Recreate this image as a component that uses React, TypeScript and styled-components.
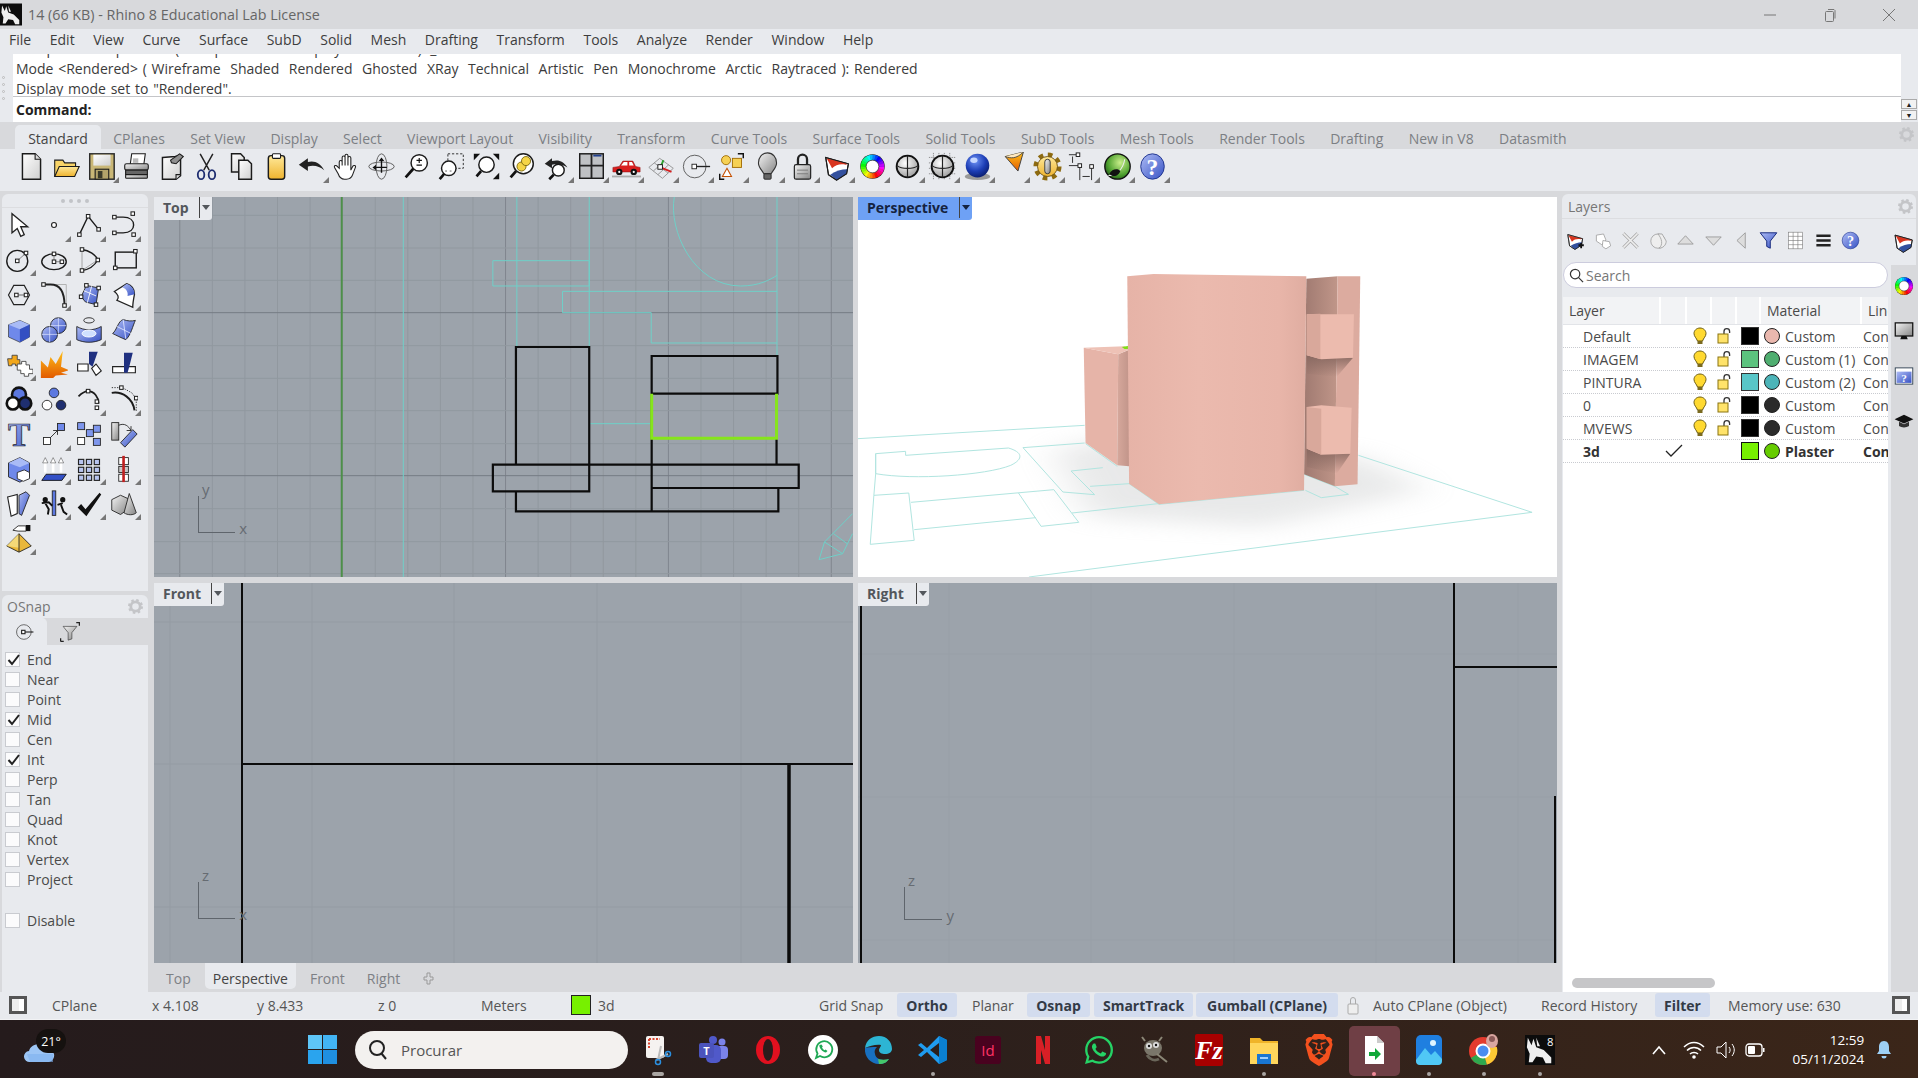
import React from "react";
import styled, { createGlobalStyle } from "styled-components";
import { FaWhatsapp } from "react-icons/fa";
import { SiBrave } from "react-icons/si";

const FONT = `"Open Sans", "Noto Sans", "Liberation Sans", sans-serif`;

const Global = createGlobalStyle`
  html, body { margin: 0; padding: 0; background: #d8d9dc; overflow: hidden; }
  #root { width: 1918px; height: 1078px; }
  * { box-sizing: border-box; }
`;

const Page = styled.div`
  width: 1918px; height: 1078px; display: flex; flex-direction: column; overflow: hidden;
  font-family: ${FONT}; font-size: 14px; color: #444; background: #d8d9dc;
`;
const HiddenDefs = styled.svg`position: absolute; width: 0; height: 0;`;
const Ico = styled.svg`display: block; flex: none;`;

/* ---------- title + menu ---------- */
const TitleBar = styled.div`height: 29px; background: #d8d9dc; display: flex; align-items: center; color: #666;`;
const TitleLogo = styled.div`width: 22px; height: 27px; margin-right: 6px; flex: none;`;
const TitleText = styled.div`flex: 1; font-size: 14.3px;`;
const WinControls = styled.div`display: flex; align-items: center;`;
const WinBtn = styled.div<{ $w: number }>`width: ${(p) => p.$w}px; display: flex; justify-content: center; color: #777;`;
const MenuBar = styled.div`height: 25px; background: #e8eaee; display: flex; align-items: center; gap: 18.6px; padding: 0 0 4px 9px; color: #3d3d3d;`;

/* ---------- command ---------- */
const Command = styled.div`height: 68px; display: flex; background: #e8eaee;`;
const Grip = styled.div`width: 13px; display: flex; flex-direction: column; align-items: center; justify-content: center; gap: 4px; background: #e8eaee;`;
const GripDot = styled.span`width: 3px; height: 3px; border-radius: 50%; border: 1px solid #bbb; margin-left: -6px;`;
const CmdBody = styled.div`flex: 1; background: #fff; display: flex; flex-direction: column; min-width: 0;`;
const History = styled.div`height: 44px; overflow: hidden; display: flex; flex-direction: column; justify-content: flex-end; border-bottom: 1px solid #c4c5c8; padding: 0 0 0 3px;`;
const CmdLine = styled.div`height: 20px; line-height: 25px; white-space: pre; color: #3b3b3b; word-spacing: 1.15px;`;
const Prompt = styled.div`flex: 1; font-weight: 700; color: #222; padding-left: 3px; line-height: 25px;`;
const CmdSide = styled.div`width: 17px; display: flex; flex-direction: column; justify-content: flex-end; gap: 1px; padding: 0 1px 2px 0; background: #e8eaee;`;
const Spin = styled.div`height: 10px; border: 1px solid #aaa; background: #f2f2f2; display: flex; align-items: center; justify-content: center; font-size: 7px; line-height: 1; color: #222;`;

/* ---------- tabs + tool row ---------- */
const TabBar = styled.div`height: 27px; display: flex; align-items: flex-end; padding-left: 15px; position: relative; background: #d8d9dc;`;
const TopTab = styled.div<{ $on?: boolean }>`
  height: 24px; line-height: 27px; padding: 0 13.2px; margin-right: -1px; color: ${(p) => (p.$on ? "#444" : "#7c7f84")};
  background: ${(p) => (p.$on ? "#e8eaee" : "transparent")}; border-radius: 5px 5px 0 0;
`;
const TabGear = styled.div`position: absolute; right: 4px; top: 5px;`;
const ToolRow = styled.div`height: 42px; background: #e8eaee; display: flex; align-items: flex-start; padding: 0 0 0 13.5px;`;
const ToolCell = styled.div<{ $fly?: boolean }>`
  width: 35.05px; height: 35px; position: relative; display: flex; align-items: center; justify-content: center; flex: none;
  ${(p) => p.$fly && `&::after { content: ""; position: absolute; right: 0; bottom: 1px; border-left: 6px solid transparent; border-bottom: 6px solid #777; }`}
`;

/* ---------- main ---------- */
const Main = styled.div`height: 801px; display: flex; background: #d8d9dc;`;
const LeftCol = styled.div`width: 154px; padding: 3px 6px 0 2px; display: flex; flex-direction: column; gap: 4px; flex: none;`;
const ToolPanel = styled.div`height: 397px; background: #e8eaee; border-radius: 6px 6px 0 0;`;
const PanelGrip = styled.div`height: 13.5px; display: flex; justify-content: center; align-items: center; gap: 4px; border-bottom: 1px solid #dcdde0; padding-top: 1px;`;
const GripH = styled.span`width: 4px; height: 4px; border-radius: 50%; background: #c2c4c8;`;
const ToolGrid = styled.div`display: grid; grid-template-columns: repeat(4, 35px); grid-auto-rows: 34.85px; margin-left: -1px;`;
const OsnapPanel = styled.div`flex: 1; background: #e8eaee; border-radius: 6px 6px 0 0; display: flex; flex-direction: column;`;
const PanelHead = styled.div`height: 23px; display: flex; align-items: center; justify-content: space-between; padding: 0 5px 0 5px; color: #777; flex: none;`;
const SnapTabs = styled.div`height: 27px; display: flex; background: #d8d9dc; flex: none;`;
const SnapTab = styled.div<{ $on?: boolean }>`width: 45px; display: flex; align-items: center; justify-content: center; background: ${(p) => (p.$on ? "#e8eaee" : "transparent")}; border-radius: 0 5px 0 0;`;
const SnapList = styled.div`padding-top: 4px; display: flex; flex-direction: column;`;
const SnapRow = styled.div<{ $gap?: boolean }>`height: 20px; display: flex; align-items: center; gap: 7px; padding-left: 3px; margin-top: ${(p) => (p.$gap ? 21 : 0)}px; color: #4a4a4a;`;
const Box = styled.div`width: 15px; height: 15px; border: 1px solid #c9cbd0; background: #fbfbfc; position: relative; flex: none;`;
const BoxTick = styled.svg`position: absolute; left: 0; top: -1px;`;

const Center = styled.div`width: 1403px; flex: none; display: flex; flex-direction: column;`;
const ViewGrid = styled.div`display: grid; grid-template-columns: 699px 699px; grid-template-rows: 380px 380px; gap: 6px 5px; padding-top: 6px;`;
const Viewport = styled.div<{ $white?: boolean }>`position: relative; background: ${(p) => (p.$white ? "#fff" : "#9ca3ab")}; overflow: hidden;`;
const Canvas = styled.svg`position: absolute; inset: 0; width: 100%; height: 100%; display: block; * { vector-effect: non-scaling-stroke; }`;
const ViewTab = styled.div<{ $on?: boolean; $w: number }>`
  position: absolute; left: 0; top: 0; width: ${(p) => p.$w}px; height: 23px; display: flex; align-items: center; font-weight: 700; font-size: 14px; padding: 0 0 2px 9px;
  background: ${(p) => (p.$on ? "#6ea1f5" : "#e8eaee")}; color: ${(p) => (p.$on ? "#15233f" : "#53575c")}; border-radius: 0 0 3px 0;
`;
const ViewArrow = styled.div`margin-left: auto; width: 12px; height: 21px; border-left: 1px solid #444; display: flex; align-items: center; justify-content: center; margin-right: 1px;
  &::after { content: ""; border-left: 4px solid transparent; border-right: 4px solid transparent; border-top: 5px solid currentColor; }`;
const Axis = styled.div<{ $l: number; $t: number; $h: number; $w: number }>`
  position: absolute; left: ${(p) => p.$l}px; top: ${(p) => p.$t}px; width: ${(p) => p.$w}px; height: ${(p) => p.$h}px;
  border-left: 1px solid #5f656c; border-bottom: 1px solid #5f656c;
`;
const AxisV = styled.span`position: absolute; left: 3px; top: -14px; color: #666b72; font-size: 15px; line-height: 1;`;
const AxisH = styled.span`position: absolute; right: -12px; bottom: -4px; color: #666b72; font-size: 15px; line-height: 1;`;
const BottomTabs = styled.div`height: 29px; display: flex; align-items: flex-start; padding-left: 4px; color: #7d8085;`;
const BtmTab = styled.div<{ $on?: boolean }>`
  height: 26px; line-height: 31px; padding: 0 8px; margin-right: 6px; border-radius: 0 0 5px 5px; color: ${(p) => (p.$on ? "#444" : "#7d8085")}; background: ${(p) => (p.$on ? "#e8eaee" : "transparent")};
`;
const BtmPlus = styled.div`height: 31px; display: flex; align-items: center; margin-left: 9px;`;

/* ---------- layers ---------- */
const RightCol = styled.div`flex: 1; padding: 3px 2px 0 5px; display: flex; flex-direction: column; min-width: 0;`;
const LayerHead = styled.div`height: 25px; background: #e8eaee; border-radius: 6px 6px 0 0; border-bottom: 1px solid #dcdde0; display: flex; align-items: center; justify-content: space-between; padding: 0 3px 0 6px; color: #777; flex: none;`;
const LayerBody = styled.div`flex: 1; display: flex; min-height: 0;`;
const LayerMain = styled.div`width: 329px; display: flex; flex-direction: column; background: #e8eaee; flex: none;`;
const LayerTools = styled.div`height: 43px; display: flex; align-items: center; flex: none;`;
const LayerTool = styled.div`width: 27.5px; display: flex; justify-content: center; flex: none;`;
const SearchBox = styled.div`height: 26px; margin: 0 3px 0 1px; border: 1px solid #ccd; border-radius: 13px; background: #fff; display: flex; align-items: center; gap: 2px; padding-left: 5px; color: #777; flex: none;`;
const LayerTable = styled.div`margin: 9px 3px 0 1px; flex: 1; background: #fff; position: relative; overflow: hidden;`;
const LayerRow = styled.div<{ $head?: boolean; $bold?: boolean }>`
  display: grid; grid-template-columns: 98px 26px 25px 25px 24px 101px 40px; height: ${(p) => (p.$head ? 28 : 23)}px; align-items: center; white-space: nowrap;
  border-bottom: 1px ${(p) => (p.$head ? "solid #e2e4e8" : "dotted #c9cbd0")}; font-weight: ${(p) => (p.$bold ? 700 : 400)};
  color: ${(p) => (p.$bold ? "#333" : "#4a4a4a")}; background: ${(p) => (p.$head ? "#f2f3f5" : "#fff")};
`;
const HeadCell = styled.div`height: 100%; display: flex; align-items: center; padding-left: 6px; border-right: 2px solid #fff; overflow: hidden;`;
const Cell = styled.div<{ $indent?: number }>`display: flex; align-items: center; justify-content: ${(p) => (p.$indent !== undefined ? "flex-start" : "center")}; padding-left: ${(p) => p.$indent ?? 0}px; min-width: 0; overflow: hidden;`;
const Swatch = styled.div<{ $c: string; $dark?: boolean }>`width: 18px; height: 18px; background: ${(p) => p.$c}; border: 1px solid ${(p) => (p.$dark ? "#111" : "#333")}; margin-left: 4px;`;
const MatCell = styled.div`display: flex; align-items: center; gap: 5px; padding-left: 3px;`;
const Ball = styled.div<{ $c: string }>`width: 16px; height: 16px; border-radius: 50%; background: ${(p) => p.$c}; border: 1px solid #222; flex: none;`;
const LayerScroll = styled.div`position: absolute; left: 9px; bottom: 4px; width: 143px; height: 10px; border-radius: 5px; background: #c6c6c8;`;
const SideStrip = styled.div`flex: 1; display: flex; flex-direction: column; align-items: center;`;
const SideTop = styled.div`height: 46px; width: 100%; background: #e8eaee; display: flex; align-items: center; justify-content: center; flex: none;`;
const SideRest = styled.div`flex: 1; width: 100%; background: #d8d9dc; border-radius: 6px 0 0 0; display: flex; flex-direction: column; align-items: center;`;
const SideSlot = styled.div`height: 45px; display: flex; align-items: center; justify-content: center; flex: none; position: relative; top: -2px;`;

/* ---------- status + taskbar ---------- */
const StatusBar = styled.div`height: 28px; background: #e8eaee; display: flex; align-items: center; padding-bottom: 1px; color: #555; border-bottom: 1px solid #f1f2f4;`;
const StatusItem = styled.div<{ $w: number; $on?: boolean }>`
  width: ${(p) => p.$w}px; height: 24px; display: flex; align-items: center; flex: none; white-space: nowrap;
  justify-content: ${(p) => (p.$on ? "center" : "flex-start")}; font-weight: ${(p) => (p.$on ? 700 : 400)};
  background: ${(p) => (p.$on ? "#d3dcee" : "transparent")}; color: ${(p) => (p.$on ? "#333a46" : "#555")}; border-radius: 3px;
`;
const StatSwatch = styled.div`width: 20px; height: 20px; background: #77f000; border: 1px solid #222;`;
const PaneBtn = styled.div`width: 18px; height: 18px; border: 3px solid #555; background: #eee; position: relative; flex: none; &::before { content: ""; position: absolute; left: 7px; top: 0; bottom: 0; width: 5px; background: #fff; }`;
const PaneBtnLeft = styled(PaneBtn)`margin-left: 9px;`;
const Taskbar = styled.div`height: 58px; display: flex; align-items: center; padding-top: 1px; background: linear-gradient(90deg, #251b1c, #2b1f1c 45%, #3b2619); color: #fff;`;
const Weather = styled.div`width: 295px; height: 100%; position: relative; flex: none;`;
const WeatherIcon = styled.div`position: absolute; left: 24px; top: 18px;`;
const TempBadge = styled.div`position: absolute; left: 36px; top: 8px; width: 30px; height: 24px; border-radius: 12px; background: #15110f; font-size: 12.5px; display: flex; align-items: center; justify-content: center; color: #fff;`;
const WinBox = styled.div`width: 55px; display: flex; justify-content: center; flex: none;`;
const Search = styled.div`width: 273px; height: 38px; margin: 0 5px; background: #f3f1ef; border-radius: 19px; display: flex; align-items: center; padding-left: 13px; gap: 13px; color: #555; font-size: 15px; flex: none;`;
const Apps = styled.div`display: flex; flex: none; margin-left: -3px;`;
const AppCell = styled.div<{ $on?: boolean }>`
  width: 55.125px; height: 58px; display: flex; align-items: center; justify-content: center; position: relative; flex: none;
  ${(p) => p.$on && `&::before { content: ""; position: absolute; left: 2px; right: 2px; top: 5px; bottom: 3px; border-radius: 5px; background: #6f3f45; }`}
  svg { position: relative; }
`;
const AppDot = styled.span<{ $kind: string }>`
  position: absolute; bottom: 3px; left: 50%; height: 4px; border-radius: 2px; transform: translateX(-50%);
  width: ${(p) => (p.$kind === "dash" ? 12 : 4)}px; background: ${(p) => (p.$kind === "pink" ? "#f08a98" : "#a9a5a2")};
`;
const Tray = styled.div`margin-left: 77px; display: flex; align-items: center; flex: none;`;
const TrayIcon = styled.div<{ $w: number }>`width: ${(p) => p.$w}px; display: flex; justify-content: center; flex: none;`;
const Clock = styled.div`width: 93px; display: flex; flex-direction: column; align-items: flex-end; font-size: 13.5px; line-height: 19px; flex: none;`;

/* ---------- helpers ---------- */
const H = (x: number, y: number, s = 4) => <rect x={x - s / 2} y={y - s / 2} width={s} height={s} fill="#fff" stroke="#222" strokeWidth="1.2" />;
const K = { fill: "none", stroke: "#1b1b1b", strokeWidth: 1.6 } as const;
const KF = { stroke: "#1b1b1b", strokeWidth: 1.6 } as const;
const P = { stroke: "#1b1b1b", strokeWidth: 1.2 } as const;

const Wheel = ({ r = 10, w = 6 }: { r?: number; w?: number }) => (
  <>
    <circle cx="16" cy="16" r={r + w / 2 + 0.5} fill="#222" />
    {Array.from({ length: 24 }, (_, i) => {
      const a = (i / 24) * Math.PI * 2, b = ((i + 1.2) / 24) * Math.PI * 2;
      return <path key={i} d={`M${16 + r * Math.cos(a)} ${16 + r * Math.sin(a)}A${r} ${r} 0 0 1 ${16 + r * Math.cos(b)} ${16 + r * Math.sin(b)}`} fill="none" stroke={`hsl(${i * 15 + 300},95%,50%)`} strokeWidth={w} />;
    })}
    <circle cx="16" cy="16" r={r - w / 2} fill="#fff" stroke="#222" strokeWidth=".6" />
  </>
);
const Shield = () => (
  <>
    <path d="M3 6l25 7-2 11-11 7-9-6z" fill="#fff" {...P} />
    <path d="M4 7l24 6-3 1c-6-1-11 0-15 4z" fill="#d8351f" />
    <path d="M8 25l7 6 11-7 1-5c-7 0-13 2-19 6z" fill="#33509e" />
    <path d="M3 6l25 7-2 11-11 7-9-6z" fill="none" {...P} />
  </>
);
const Sphere = () => (
  <>
    <circle cx="16" cy="16" r="12" fill="url(#wire)" stroke="#111" strokeWidth="2" />
    <path d="M4.5 15c5 4 18 4 23 0M16 4v24" fill="none" stroke="#222" strokeWidth="1.3" />
  </>
);
const HelpBall = ({ c = "url(#blue)" }: { c?: string }) => (
  <>
    <ellipse cx="16" cy="16" rx="13" ry="14" fill={c} stroke="#1a2f8a" />
    <text x="16" y="25" textAnchor="middle" fontFamily="Liberation Serif" fontWeight="700" fontSize="26" fill="#fff">?</text>
  </>
);

const TB: [React.ReactNode, boolean][] = [
  [<><path d="M6 2h14l6 6v22H6z" fill="url(#paper)" {...KF} /><path d="M20 2v6h6" fill="#ddd" {...P} /></>, false],
  [<><path d="M3 27V9h9l2 3h12v4" fill="#f8d468" {...P} /><path d="M3 27l5-11h22l-5 11z" fill="url(#gold)" {...P} /></>, false],
  [<><rect x="3" y="2" width="27" height="28" fill="#c9b777" stroke="#2a2a2a" strokeWidth="1.6" /><rect x="7" y="3" width="19" height="12" fill="url(#paper)" /><rect x="9" y="19" width="15" height="11" fill="#b3a36a" {...P} /><rect x="12" y="21" width="5" height="8" fill="#3a3a2a" /></>, true],
  [<><rect x="9" y="2" width="15" height="12" fill="#fff" {...P} transform="skewX(-8) translate(2 0)" /><rect x="12" y="7" width="6" height="5" fill="#bbb" /><rect x="3" y="13" width="26" height="7" rx="2" fill="url(#gray)" {...P} /><rect x="4" y="20" width="24" height="5" fill="#666" {...P} /><rect x="4" y="25" width="24" height="4" rx="1" fill="url(#gray)" {...P} /></>, false],
  [<><path d="M6 6l14-1 6-1v22l-5 4H6z" fill="url(#paper)" {...KF} /><path d="M21 30v-5h5" fill="#ddd" {...P} /><path d="M15 9l10-7 4 3-8 8-5-1z" fill="#8f8f8f" {...P} /></>, false],
  [<><path d="M9 2l10 18M23 2L13 20" fill="none" stroke="#222" strokeWidth="1.6" /><ellipse cx="10" cy="25" rx="3.6" ry="5" fill="none" stroke="#1e2d70" strokeWidth="2" /><ellipse cx="22" cy="25" rx="3.6" ry="5" fill="none" stroke="#1e2d70" strokeWidth="2" /></>, false],
  [<><path d="M5 2h10l4 4v16H5z" fill="url(#paper)" {...KF} /><path d="M13 9h10l4 4v17H13z" fill="url(#paper)" {...KF} /></>, false],
  [<><rect x="7" y="4" width="18" height="26" rx="3" fill="url(#gold)" {...KF} /><rect x="11.500" y="2" width="9" height="5" rx="1" fill="#fff" {...P} /></>, false],
  [<path d="M2 14l10-7v4c7-2 14 1 18 9-5-4-11-6-18-4v5z" fill="#222" />, true],
  [<path d="M8 18V11a1.600 1.600 0 0 1 3.200 0v4V6a1.600 1.600 0 0 1 3.200 0v9V4a1.600 1.600 0 0 1 3.200 0v11V6.500a1.600 1.600 0 0 1 3.200 0V20l2-4c1-2 4-1 3 1l-3 8c-1 3-3 5-7 5h-2c-4 0-6-3-7-6l-4-7c-1-2 2-3 3-1z" fill="#fff" stroke="#222" strokeWidth="1.200" />, false],
  [<><ellipse cx="16" cy="16" rx="6" ry="14" fill="none" stroke="#555" /><ellipse cx="16" cy="16" rx="14" ry="5" fill="none" stroke="#555" /><path d="M16 9v14M10 17h12" stroke="#111" strokeWidth="1.500" /><path d="M13 10l3-4 3 4zM10 14v6l-4-3z" fill="#111" /></>, false],
  [<><circle cx="19" cy="12" r="9" fill="#fff" {...KF} /><path d="M12.500 18.500L4 28" stroke="#111" strokeWidth="3" /><path d="M19 6.500v5.500M16 9.200h6M16 14.500h6" stroke="#111" strokeWidth="1.300" /></>, false],
  [<><rect x="12" y="2" width="17" height="16" fill="none" stroke="#222" strokeDasharray="2.500 2" /><circle cx="13" cy="18" r="8" fill="#fff" {...KF} /><path d="M8 24l-5 6" stroke="#111" strokeWidth="3" /><path d="M9 21h2M14 21h2" stroke="#555" /></>, false],
  [<><circle cx="16" cy="14" r="8.500" fill="#fff" {...KF} /><path d="M10 21l-5 6" stroke="#111" strokeWidth="3" /><path d="M2 2h7l-7 7zM30 2h-7l7 7zM30 30h-7l7-7z" fill="#111" /></>, false],
  [<><circle cx="18" cy="13" r="11" fill="#fff" {...KF} /><circle cx="16" cy="16" r="5" fill="#f5d547" stroke="#7a6810" /><circle cx="21" cy="10" r="5" fill="#f5d547" stroke="#7a6810" /><path d="M10 21l-6 7" stroke="#111" strokeWidth="3" /></>, false],
  [<><path d="M3 13l8-6v3c7-2 13 0 17 7-5-3-10-4-17-3v4z" fill="#222" /><circle cx="18" cy="20" r="6.500" fill="#fff" {...KF} /><path d="M13 25l-5 5" stroke="#111" strokeWidth="3" /></>, true],
  [<><rect x="3" y="2" width="26" height="27" fill="#bfc1c4" {...KF} /><path d="M16 2v27M3 15h26" stroke="#222" strokeWidth="2" /><rect x="18" y="3" width="9" height="2" fill="#21408f" /></>, true],
  [<><path d="M1 22v-5l7-1 4-6h11l3 6 5 1v5z" fill="#d92020" stroke="#8a1010" strokeWidth=".6" /><path d="M13 11h4v4h-7zM19 11h3l2 4h-5z" fill="#fff" /><circle cx="8" cy="22" r="3.500" fill="#111" /><circle cx="8" cy="22" r="1.200" fill="#fff" /><circle cx="24" cy="22" r="3.500" fill="#111" /><circle cx="24" cy="22" r="1.200" fill="#fff" /><path d="M0 27h32" stroke="#aaa" strokeWidth="2" /></>, true],
  [<><path d="M2 17L14 7M7 21L19 10M12 25L24 14M17 29L29 18M2 17l15 12M8 12l15 11M14 7l15 11" fill="none" stroke="#888" strokeWidth=".9" /><path d="M15 17l12 5" stroke="#d32020" strokeWidth="2" /><path d="M15 17l3-8" stroke="#2ca02c" strokeWidth="2" /><rect x="12" y="14" width="5" height="5" fill="#fff" stroke="#111" /></>, true],
  [<><circle cx="14" cy="16" r="12.500" fill="none" stroke="#555" /><rect x="11" y="13.500" width="5" height="5" fill="#fff" stroke="#222" /><path d="M16 16h15" stroke="#222" strokeWidth="1.500" /></>, true],
  [<><circle cx="10" cy="9" r="5" fill="#f6d154" stroke="#a06a00" /><rect x="17" y="7" width="10" height="10" fill="#f6d154" stroke="#a06a00" /><path d="M11 18l5 9H6z" fill="#fff" stroke="#c44f00" strokeWidth="1.200" /><path d="M23 2h6v5M3 24v6h5" fill="none" stroke="#111" strokeWidth="1.600" /></>, true],
  [<><path d="M16 1c-6 0-10 5-10 11 0 5 4 8 6 12h8c2-4 6-7 6-12 0-6-4-11-10-11z" fill="url(#gray)" stroke="#333" strokeWidth="1.200" /><rect x="12" y="24" width="8" height="6" rx="1" fill="#666" stroke="#222" /></>, true],
  [<><path d="M11 14V8a5 5 0 0 1 10 0v6" fill="none" stroke="#222" strokeWidth="2.500" /><rect x="7" y="14" width="18" height="16" rx="2" fill="url(#gray)" stroke="#222" strokeWidth="1.300" /><path d="M10 20h12M10 24h12" stroke="#777" /></>, true],
  [<Shield />, true],
  [<Wheel />, true],
  [<Sphere />, true],
  [<><path d="M1 6h30M1 12h30M1 18h30M1 24h30M6 1v30M12 1v30M18 1v30M24 1v30" stroke="#888" strokeDasharray="1.500 1" /><Sphere /></>, true],
  [<><ellipse cx="16" cy="27" rx="14" ry="4" fill="#999" /><circle cx="16" cy="15" r="13" fill="url(#ball)" /><ellipse cx="12" cy="9" rx="4" ry="3" fill="#c5d6ff" /></>, true],
  [<g transform="translate(4 -3)"><ellipse cx="14" cy="8" rx="10" ry="3" fill="#fff2d0" /><path d="M4 8L24 3 18 24z" fill="url(#orange)" stroke="#444" strokeWidth="1.100" /><path d="M4 8c6 2 12 3 20-5" fill="#ffe9c0" stroke="#444" /></g>, true],
  [<><circle cx="16" cy="16" r="13" fill="none" stroke="#8d6a10" strokeWidth="5" strokeDasharray="5.100 5.100" /><circle cx="16" cy="16" r="11" fill="url(#gold)" stroke="#6a5010" /><rect x="13" y="8" width="6" height="16" rx="3" fill="url(#gray)" stroke="#333" /></>, true],
  [<><rect x="9" y="1" width="4" height="4" fill="#fff" stroke="#111" /><path d="M1 3h8M1 15h10M5 5v7" stroke="#222" /><rect x="11" y="13" width="4" height="4" fill="#fff" stroke="#111" /><rect x="24" y="14" width="4" height="4" fill="#fff" stroke="#111" /><path d="M13 17v14M26 18v13M16 27h8" stroke="#222" /></>, true],
  [<><circle cx="16" cy="16" r="14" fill="url(#gball)" stroke="#111" strokeWidth="1.500" /><path d="M6 26c8 0 16-6 18-18" fill="none" stroke="#eee" strokeWidth="1.200" /><path d="M7 24c3-6 10-6 12-3-1 5-8 8-12 3z" fill="#111" /></>, true],
  [<HelpBall />, true],
];

const LT: [React.ReactNode, boolean][] = [
  [<path d="M8 3v22l6-5 4 9 4-2-4-9h8z" fill="#fff" stroke="#222" strokeWidth="1.500" />, false],
  [<circle cx="16" cy="16" r="2.800" fill="#fff" stroke="#222" strokeWidth="1.300" />, true],
  [<><path d="M5 27L15 6l12 15" {...K} />{H(5, 27)}{H(15, 6)}{H(27, 21)}</>, true],
  [<><path d="M5 7h10c8 0 12 4 12 9s-4 9-12 9H5" {...K} />{H(5, 7)}{H(26, 3)}{H(5, 25)}{H(27, 27)}</>, true],
  [<><circle cx="14" cy="17" r="12" {...K} /><path d="M14 17l10-9" stroke="#777" />{H(14, 17)}{H(24, 8)}</>, true],
  [<><ellipse cx="16" cy="18" rx="14" ry="9" {...K} /><path d="M16 18h9M16 18V9" stroke="#777" />{H(16, 18)}{H(16, 9)}{H(25, 18)}</>, true],
  [<><path d="M8 4c8 1 16 6 18 12-4 7-10 11-18 12" {...K} /><path d="M8 4v24l18-12" fill="none" stroke="#999" />{H(8, 4)}{H(26, 16)}{H(8, 28)}</>, true],
  [<><rect x="6" y="7" width="24" height="18" {...K} />{H(6, 25)}{H(29, 6)}</>, true],
  [<><path d="M4 16l6-11h12l6 11-6 11H10z" fill="none" stroke="#222" strokeWidth="1.300" />{H(13, 16)}<path d="M15 16h9" stroke="#555" />{H(24, 16)}</>, true],
  [<><path d="M4 4h26v24" fill="none" stroke="#aaa" /><path d="M4 4h8c11 0 16 9 16 24" fill="none" stroke="#222" strokeWidth="2.200" />{H(4, 4)}{H(28, 28)}</>, true],
  [<><path d="M7 18L13 5l14 3-3 19-12-3z" fill="url(#blue)" stroke="#222" /><path d="M10 11l14 6M19 6l-5 19" stroke="#fff" />{H(7, 18)}{H(13, 5)}{H(27, 8)}{H(24, 27)}</>, true],
  [<><path d="M5 12l14-9c6 2 9 7 9 12-1 5-2 10-2 15L8 22c3-3 1-7-3-10z" fill="#fff" stroke="#222" strokeWidth="1.500" /><path d="M19 3c6 2 9 7 9 12l-8 2c1-4-1-8-6-10z" fill="url(#blue)" /></>, true],
  [<><path d="M4 10l13-5 11 5v14l-11 6-13-6z" fill="#6f89ea" stroke="#222" strokeWidth=".7" /><path d="M4 10l13 5 11-5-11-5z" fill="#a9bbf6" /><path d="M17 15v15l11-6V10z" fill="#334fc2" /></>, true],
  [<><circle cx="21" cy="11" r="9" fill="url(#blue)" stroke="#222" /><circle cx="11" cy="21" r="9" fill="url(#blue)" stroke="#222" /><path d="M12 11h18M21 2v18M2 21h18M11 12v18" stroke="#dfe6ff" strokeWidth=".8" /></>, true],
  [<><ellipse cx="16" cy="5" rx="6" ry="3" fill="none" stroke="#222" /><path d="M2 12c9 5 19 5 28 0v15c-9 4-19 4-28 0z" fill="url(#blue)" stroke="#222" /><ellipse cx="16" cy="20" rx="8" ry="4" fill="#cfe0ff" stroke="#fff" /></>, true],
  [<><path d="M3 20c5-4 6-14 12-16 5 2 10 2 14 1-3 6-5 17-11 22-5-2-11-5-15-7z" fill="url(#blue)" stroke="#222" /><path d="M8 12l16 8M15 4l3 22" stroke="#dfe6ff" /></>, true],
  [<><path d="M3 10h5V6h6v5h3v7h-5v-2H8v2H4z" fill="#f2a71b" stroke="#444" /><path d="M14 16h5v-3h5v4h4v5h4v5h-5v3h-5v-3h-4v-4h-4z" fill="#fff" stroke="#444" /></>, true],
  [<path d="M1 12l8 8 3-12 6 8 8-15-2 18 9 4-9 3 8 2-14 1-3 3H1z" fill="url(#orange)" />, false],
  [<><path d="M3 16h12v8H3zM19 21l5-5 6 8-6 5z" fill="#fff" stroke="#222" strokeWidth="1.300" /><path d="M16 2h10l-6 17-4-3z" fill="#1f3080" /></>, false],
  [<><path d="M3 19h26v7H3z" fill="#fff" stroke="#222" strokeWidth="1.300" /><path d="M16 3h10l-4 16-2 7h-4z" fill="#1f3080" /></>, false],
  [<><circle cx="16" cy="11" r="8" fill="#5c78e0" stroke="#111" strokeWidth="3" /><circle cx="9" cy="21" r="7" fill="#fff" stroke="#111" strokeWidth="3" /><circle cx="23" cy="21" r="7" fill="#1f2f70" stroke="#111" strokeWidth="3" /></>, true],
  [<><circle cx="16" cy="9" r="5.500" fill="#5c78e0" stroke="#222" /><circle cx="8" cy="23" r="5.500" fill="#fff" stroke="#222" /><circle cx="24" cy="23" r="5.500" fill="#1f2f70" stroke="#222" /></>, false],
  [<><path d="M4 13c4-4 7-6 11-6 7 0 12 7 12 14" {...K} strokeWidth="2" />{H(15, 7)}{H(25, 19)}{H(25, 26)}</>, true],
  [<><path d="M2 9c12-2 24 6 26 20" {...K} strokeWidth="2.200" /><path d="M2 3h10M30 16v14M14 3l11 6 5 7" fill="none" stroke="#222" strokeDasharray="1.500 1.500" />{H(13, 3)}{H(30, 15)}</>, true],
  [<text x="16" y="30" textAnchor="middle" fontFamily="Liberation Serif" fontWeight="700" fontSize="38" fill="url(#blue)" stroke="#222" strokeWidth=".8">T</text>, false],
  [<><rect x="4" y="20" width="8" height="8" fill="#fff" stroke="#222" /><rect x="20" y="4" width="8" height="8" fill="#6f89ea" stroke="#222" /><path d="M12 20l8-8M15 12h5v5" fill="none" stroke="#222" /></>, true],
  [<><rect x="3" y="3" width="8" height="8" fill="#7e96ec" stroke="#222" /><rect x="3" y="20" width="8" height="8" fill="#fff" stroke="#222" /><rect x="13" y="11" width="8" height="8" fill="#7e96ec" stroke="#222" /><rect x="21" y="6" width="8" height="8" fill="#7e96ec" stroke="#222" /><rect x="21" y="21" width="8" height="8" fill="#7e96ec" stroke="#222" /></>, false],
  [<><rect x="2" y="3" width="8" height="20" fill="url(#gray)" stroke="#222" /><path d="M10 6c7-3 11 1 14 6M24 7v5h-5" fill="none" stroke="#222" /><path d="M12 26l14-15 5 5-14 15z" fill="url(#blue)" stroke="#222" /></>, false],
  [<><path d="M4 9l13-6 11 6v16l-11 6-13-6z" fill="#6f89ea" stroke="#222" /><path d="M4 9l13 5 11-5-11-6z" fill="#a9bbf6" /><path d="M14 20l8-3 6 3v7l-7 3-7-3z" fill="#fff" stroke="#222" /></>, true],
  [<><path d="M2 29l5-7h23l-5 7z" fill="#3350c6" stroke="#111" /><path d="M6 20V8M15 20V8M24 20V8" stroke="#fff" strokeWidth="3" /><path d="M3 9l3-6 3 6zM12 9l3-6 3 6zM21 9l3-6 3 6z" fill="#fff" stroke="#222" strokeWidth=".5" /></>, true],
  [<>{[5, 14, 23].flatMap((y) => [4, 13, 22].map((x) => <rect key={x + "_" + y} x={x} y={y} width="6" height="6" fill="#b8c5f0" stroke="#222" strokeWidth="1.300" />))}</>, true],
  [<><rect x="10" y="3" width="11" height="8" fill="#fff" stroke="#222" /><rect x="10" y="13" width="11" height="7" fill="#c9c9c9" stroke="#222" /><rect x="10" y="22" width="11" height="8" fill="#fff" stroke="#222" /><path d="M15.500 1v30" stroke="#c02020" strokeWidth="3" /></>, true],
  [<><path d="M3 8l11-3v22L7 30z" fill="#fff" stroke="#222" strokeWidth="1.300" /><path d="M16 27V6l8-4 4 4-9 23z" fill="url(#blue)" stroke="#222" /></>, true],
  [<><rect x="14" y="1" width="4" height="28" fill="#5c78e0" stroke="#222" /><circle cx="6" cy="11" r="3" fill="#111" /><circle cx="26" cy="11" r="3" fill="#111" /><path d="M6 15l4 7-1 6M2 15l8-1 4 4M26 15l-6 2M24 17l3 8 4 3" fill="none" stroke="#111" strokeWidth="2.200" /></>, true],
  [<path d="M3 20l4-4 5 6L28 3l2 2-17 25z" fill="#111" />, true],
  [<><path d="M2 11l10-5 9 4v12l-9 6-10-5z" fill="url(#gray)" stroke="#222" /><path d="M22 4l8 22c-3 3-10 3-14 0z" fill="url(#gray)" stroke="#222" /></>, true],
  [<><path d="M16 10L30 24 16 31 2 24z" fill="#e9b73a" stroke="#222" /><path d="M16 10L2 24l14 2z" fill="#f5d978" /><path d="M16 10v21" stroke="#222" /><path d="M9 6l6-5h9v6h-9z" fill="#fff" stroke="#222" /><rect x="24" y="0" width="5" height="7" fill="#111" /></>, true],
];

const LayerIcons: React.ReactNode[] = [
  <><Shield /><path d="M21 24h9M25.500 20v9" stroke="#111" strokeWidth="3" /></>,
  <g fill="#fff" stroke="#999" strokeWidth="1.300"><path d="M4 7l12-2 4 10-7 8-9-6z" /><path d="M15 16l11 2 2 7-8 5-6-4z" /></g>,
  <><path d="M4 4l24 24M28 4L4 28" stroke="#a5a5a5" strokeWidth="5" /><path d="M4 4l24 24M28 4L4 28" stroke="#eee" strokeWidth="2.500" /></>,
  <g fill="#eee" stroke="#999" strokeWidth="1.300"><circle cx="15" cy="17" r="12" /><path d="M15 5h7l7 12c0 7-6 12-12 12 7-6 5-16-2-24z" /></g>,
  <path d="M3 22L16 8l13 14z" fill="#ddd" stroke="#999" strokeWidth="1.500" />,
  <path d="M3 10l13 14 13-14z" fill="#ddd" stroke="#999" strokeWidth="1.500" />,
  <path d="M24 3L10 16l14 13z" fill="#ddd" stroke="#999" strokeWidth="1.500" />,
  <path d="M2 3h28L19 17v12l-6-3v-9z" fill="url(#blue)" stroke="#13267a" strokeWidth="1.600" />,
  <g fill="#fff" stroke="#777"><rect x="4" y="2" width="24" height="28" /><path d="M12 2v28M20 2v28M4 9h24M4 16h24M4 23h24" /></g>,
  <path d="M4 8h24M4 16h24M4 24h24" stroke="#222" strokeWidth="4" />,
  <><circle cx="16" cy="16" r="14" fill="url(#blue)" stroke="#1a2f8a" /><text x="16" y="25" textAnchor="middle" fontFamily="Liberation Serif" fontWeight="700" fontSize="24" fill="#fff">?</text></>,
];

const Bulb = () => (
  <Ico width="14" height="18" viewBox="0 0 14 18"><path d="M7 1C3.500 1 1 3.500 1 6.500c0 3 2.500 4.500 3.500 7.500h5c1-3 3.500-4.500 3.500-7.500C13 3.500 10.500 1 7 1z" fill="#ffd930" stroke="#6a5a10" /><rect x="4.500" y="14" width="5" height="3" fill="#7a6a20" /></Ico>
);
const Lock = () => (
  <Ico width="16" height="16" viewBox="0 0 16 16"><path d="M7 6V3.500a2.800 2.800 0 0 1 5.600 0V5" fill="none" stroke="#333" strokeWidth="1.300" /><rect x="1" y="6" width="10" height="9" fill="#ffe36a" stroke="#8a7410" /></Ico>
);
const Gear = () => (
  <Ico width="15" height="15" viewBox="0 0 16 16"><circle cx="8" cy="8" r="6.500" fill="none" stroke="#c4c5c8" strokeWidth="3" strokeDasharray="2.550 2.550" /><circle cx="8" cy="8" r="5" fill="none" stroke="#c4c5c8" strokeWidth="3" /></Ico>
);
const Tick = () => (
  <BoxTick width="15" height="15" viewBox="0 0 15 15"><path d="M2.500 8l3.500 4L13 3" fill="none" stroke="#222" strokeWidth="2" /></BoxTick>
);
const RhinoLogo = ({ w, h, eight }: { w: number; h: number; eight?: boolean }) => (
  <Ico width={w} height={h} viewBox="0 0 32 32"><rect width="32" height="32" fill="#0c0c0c" />
    <path d="M3 3l4 8 2-7 3 9 8 3 8 8v6h-6l-3-6-7-1-4 6H4l1-9-3-7z" fill="#eee" /><path d="M12 3l4 9-3 0z" fill="#eee" />
    {eight && <text x="27" y="12" textAnchor="middle" fontFamily="Open Sans" fontSize="12" fill="#fff">8</text>}
  </Ico>
);

const Apps17: [React.ReactNode, string][] = [
  [<Ico width="30" height="32" viewBox="0 0 30 32"><rect x="3" y="2" width="18" height="22" rx="2" fill="#f5f2f0" /><path d="M6 5h11M6 5v10" stroke="#d8442e" strokeWidth="2" strokeDasharray="2 1.500" /><path d="M15 26l3-14M25 20l-12 6" stroke="#bbb" strokeWidth="2" /><circle cx="15" cy="28" r="2.500" fill="none" stroke="#2a8fe0" strokeWidth="1.500" /><circle cx="25" cy="20" r="2.500" fill="none" stroke="#2a8fe0" strokeWidth="1.500" /></Ico>, "dash"],
  [<Ico width="32" height="30" viewBox="0 0 32 30"><circle cx="25" cy="7" r="3.500" fill="#7b83eb" /><rect x="19" y="11" width="12" height="13" rx="4" fill="#7b83eb" /><circle cx="16" cy="5" r="4" fill="#5059c9" /><rect x="9" y="10" width="15" height="18" rx="5" fill="#5059c9" /><rect x="2" y="8" width="15" height="15" rx="2" fill="#4b53bc" /><text x="9.500" y="20" textAnchor="middle" fontFamily="Open Sans" fontWeight="700" fontSize="11" fill="#fff">T</text></Ico>, ""],
  [<Ico width="30" height="32" viewBox="0 0 30 32"><ellipse cx="15" cy="16" rx="12" ry="14" fill="#e2101f" /><ellipse cx="15" cy="16" rx="5" ry="11" fill="#2a1c1c" /></Ico>, ""],
  [<Ico width="32" height="32" viewBox="0 0 32 32"><circle cx="16" cy="16" r="15" fill="#fff" /><path d="M9 24l1.500-4.500A8 8 0 1 1 13 22z" fill="none" stroke="#1fa855" strokeWidth="1.800" /><path d="M12.500 11c-1 2 3 7.500 6.500 7.500l1.500-1.500-2-1.500-1 .7c-1-.5-2-1.500-2.500-2.700l.8-1-1.300-2z" fill="#1fa855" /></Ico>, ""],
  [<Ico width="32" height="32" viewBox="0 0 32 32"><path d="M3 14C4 6 10 2 17 2c8 0 13 6 13 13 0 3-3 5-7 5-3 0-6-1-6-4 0-2 2-3 2-5-5-1-11 1-16 3z" fill="#2db5d4" /><path d="M3 14c-1 9 6 16 14 16 5 0 8-2 10-5-5 2-13 1-14-5-1-3 0-5 2-7-5 0-9 0-12 1z" fill="#1870c0" /><path d="M17 30c5 0 8-2 10-5-4 1-8 1-11 0z" fill="#45c76a" /></Ico>, ""],
  [<Ico width="32" height="32" viewBox="0 0 32 32"><path d="M22 2l8 4v20l-8 4-12-12-6 5-3-2 6-5-6-5 3-2 6 5z" fill="#1f9cf0" /><path d="M22 9v14l-9-7z" fill="#2a1f1c" /><path d="M22 2l8 4v20l-8 4z" fill="#0a7fd0" /></Ico>, "dot"],
  [<Ico width="28" height="32" viewBox="0 0 28 32"><rect x="1" y="2" width="26" height="28" rx="3" fill="#49021f" /><text x="14" y="22" textAnchor="middle" fontFamily="Open Sans" fontSize="15" fill="#ff3366">Id</text></Ico>, ""],
  [<Ico width="18" height="32" viewBox="0 0 18 32"><path d="M2 2h5l4 14V2h5v28h-5L7 16v14H2z" fill="#d81f26" /></Ico>, ""],
  [<FaWhatsapp size={32} color="#25d366" />, ""],
  [<Ico width="30" height="30" viewBox="0 0 30 30"><ellipse cx="14" cy="13" rx="9" ry="8" fill="#7a766a" /><circle cx="10" cy="11" r="3" fill="#ddd" /><circle cx="17" cy="10" r="3" fill="#ddd" /><circle cx="10" cy="11" r="1.200" fill="#111" /><circle cx="17" cy="10" r="1.200" fill="#111" /><path d="M6 6L3 2M20 6l3-4M18 19l10 8" stroke="#8a8676" strokeWidth="2" /><path d="M8 20c3 5 8 6 12 4" stroke="#6a665a" strokeWidth="3" fill="none" /></Ico>, ""],
  [<Ico width="30" height="34" viewBox="0 0 30 34"><rect x="1" y="1" width="28" height="32" rx="2" fill="#a80000" /><text x="15" y="26" textAnchor="middle" fontFamily="Liberation Serif" fontStyle="italic" fontWeight="700" fontSize="26" fill="#fff">Fz</text></Ico>, ""],
  [<Ico width="32" height="32" viewBox="0 0 32 32"><path d="M2 4h10l3 3h15v23H2z" fill="#f0b429" /><path d="M2 9h28v21H2z" fill="#ffd65c" /><rect x="9" y="20" width="14" height="10" fill="#1976d2" /><rect x="12" y="23" width="8" height="2" fill="#9fd0ff" /></Ico>, "dot"],
  [<SiBrave size={32} color="#f4511e" />, ""],
  [<Ico width="24" height="30" viewBox="0 0 24 30"><path d="M3 1h12l7 7v21H3z" fill="#fff" /><path d="M15 1v7h7" fill="#ccc" /><path d="M7 17h6v-4l6 6-6 6v-4H7z" fill="#10a838" /></Ico>, "pink"],
  [<Ico width="28" height="32" viewBox="0 0 28 32"><rect x="1" y="1" width="26" height="30" rx="5" fill="#1f7fe0" /><path d="M1 26l9-12 6 7 4-4 7 8v2a4 4 0 0 1-4 4H5a4 4 0 0 1-4-4z" fill="#50c8f5" /><circle cx="18" cy="9" r="3" fill="#dff4ff" /></Ico>, "dot"],
  [<Ico width="32" height="34" viewBox="0 0 32 34"><circle cx="15" cy="18" r="14" fill="#e33b2e" /><path d="M15 18L2.800 25A14 14 0 0 0 19 31.400z" fill="#2fa84f" /><path d="M15 18l4 13.400A14 14 0 0 0 28.800 14L15 14z" fill="#fcc934" /><circle cx="15" cy="18" r="6.500" fill="#4a8cf0" stroke="#fff" strokeWidth="2" /><ellipse cx="24" cy="8" rx="6" ry="7" fill="#d9a6a0" /><circle cx="24" cy="6" r="3" fill="#8a5a58" /></Ico>, "dot"],
  [<RhinoLogo w={30} h={32} eight />, "dot"],
];

const SNAP: [string, boolean][] = [["End", true], ["Near", false], ["Point", false], ["Mid", true], ["Cen", false], ["Int", true], ["Perp", false], ["Tan", false], ["Quad", false], ["Knot", false], ["Vertex", false], ["Project", false]];
const TABS = ["CPlanes", "Set View", "Display", "Select", "Viewport Layout", "Visibility", "Transform", "Curve Tools", "Surface Tools", "Solid Tools", "SubD Tools", "Mesh Tools", "Render Tools", "Drafting", "New in V8", "Datasmith"];
const MENU = ["File", "Edit", "View", "Curve", "Surface", "SubD", "Solid", "Mesh", "Drafting", "Transform", "Tools", "Analyze", "Render", "Window", "Help"];
const LAYERS = [
  { n: "Default", c: "#000", m: "#eab8ae", t: "Custom" },
  { n: "IMAGEM", c: "#5cc27e", m: "#4fae70", t: "Custom (1)" },
  { n: "PINTURA", c: "#58c6c8", m: "#4cb4b8", t: "Custom (2)" },
  { n: "0", c: "#000", m: "#2b2b2b", t: "Custom" },
  { n: "MVEWS", c: "#000", m: "#2b2b2b", t: "Custom" },
];
const STATUS: { t: string; w: number; on?: boolean }[] = [
  { t: "CPlane", w: 100 }, { t: "x 4.108", w: 105 }, { t: "y 8.433", w: 121 }, { t: "z 0", w: 103 }, { t: "Meters", w: 90 },
];
const STATUS2: { t: string; w: number; on?: boolean }[] = [
  { t: "3d", w: 221 }, { t: "Grid Snap", w: 78 }, { t: "Ortho", w: 60, on: true }, { t: "", w: 15 }, { t: "Planar", w: 55 }, { t: "Osnap", w: 63, on: true }, { t: "", w: 4 },
  { t: "SmartTrack", w: 99, on: true }, { t: "", w: 3 }, { t: "Gumball (CPlane)", w: 142, on: true }, { t: "", w: 9 },
];
const STATUS3: { t: string; w: number; on?: boolean }[] = [
  { t: "Auto CPlane (Object)", w: 168 }, { t: "Record History", w: 114 }, { t: "Filter", w: 55, on: true }, { t: "", w: 18 }, { t: "Memory use: 630", w: 164 },
];

const TopDrawing = () => {
  const vx = [65, 137, 209, 281, 353, 497, 569, 641, 713, 785, 857, 929, 1001, 1073, 1145, 1217, 1289, 1361, 1433, 1505];
  const hy = [75, 173, 270, 367, 466, 564, 661, 760, 856, 955, 1054, 1150];
  return (
    <Canvas viewBox="8 20 1545 1140" preserveAspectRatio="none">
      {vx.map((x) => <path key={x} d={`M${x} 20V1160`} stroke={x === 65 || x === 785 || x === 1145 || x === 1505 ? "#80868e" : "#91989f"} />)}
      {hy.map((y) => <path key={y} d={`M8 ${y}H1553`} stroke={y === 367 || y === 856 ? "#767c84" : "#91989f"} />)}
      <path d="M423 20V1160" stroke="#4d8f4a" strokeWidth="2" />
      <g fill="none" stroke="#6fd0c8" strokeWidth="1">
        <path d="M559 20V1160M810 20V470M970 20V470M757 211H970V287H757ZM911 303H1385M911 303V367H1107V458H1385M1385 20V497M972 700H1108" />
        <path d="M1158 20C1145 120 1200 287 1305 287C1345 287 1370 268 1385 255" />
        <path d="M1552 970L1490 1055L1478 1108L1530 1090L1552 1030M1490 1055L1530 1090M1510 1030L1540 1060" />
      </g>
      <g fill="none" stroke="#0c0c0c" strokeWidth="2.200">
        <path d="M808 823V470H970V903H757V823H1433V893H1108M1108 497H1386V610H1108ZM1108 497V963M808 903V963H1388V893M1384 744V823" />
      </g>
      <path d="M1108 610V744H1384V610" fill="none" stroke="#86e51c" strokeWidth="3" />
    </Canvas>
  );
};

const PerspDrawing = () => (
  <Canvas viewBox="8 20 1542 1140" preserveAspectRatio="none">
    <defs>
      <filter id="soft" x="-40%" y="-80%" width="180%" height="260%"><feGaussianBlur stdDeviation="45 30" /></filter>
      <linearGradient id="main" x1="0" y1="0" x2="1" y2="0"><stop offset="0" stopColor="#e6b3a7" /><stop offset=".4" stopColor="#ebbaae" /><stop offset=".85" stopColor="#e8b5a9" /><stop offset="1" stopColor="#dfada1" /></linearGradient>
      <linearGradient id="dark" x1="0" y1="0" x2="1" y2="0"><stop offset="0" stopColor="#a07a71" /><stop offset="1" stopColor="#c09689" /></linearGradient>
      <linearGradient id="leftd" x1="0" y1="0" x2="1" y2="0"><stop offset="0" stopColor="#d6a89c" /><stop offset="1" stopColor="#c2958a" /></linearGradient>
      <linearGradient id="under" x1="0" y1="0" x2="0" y2="1"><stop offset="0" stopColor="#8a6a62" /><stop offset="1" stopColor="#8a6a62" stopOpacity="0" /></linearGradient>
    </defs>
    <path d="M440 780L620 730L1120 800L1260 900L900 1010L520 980Z" fill="#b9bcbd" opacity=".32" filter="url(#soft)" />
    <g fill="none" stroke="#b1e5e0" strokeWidth="1">
      <path d="M8 745L508 705M1112 795L1495 966M385 1160L1495 966" />
      <path d="M47 790L113 783V795L340 773C370 785 375 805 345 825C290 855 130 870 47 850ZM47 790V850L43 915L120 908L132 1050L35 1062L43 915" />
      <path d="M372 772L508 758M372 772L460 905L530 913L478 842L548 832M510 760L580 828M520 888L606 880M606 880L672 942L992 900M992 852L1060 888M995 900L1030 922L1090 912L1060 888" />
      <path d="M125 936L440 898M132 1018L400 982M362 908L412 1008L495 996L440 898M480 968L670 940" />
    </g>
    <path d="M506 472L582 492L580 825L510 758Z" fill="#e6b4a8" />
    <path d="M582 492L606 478V828L580 825Z" fill="url(#leftd)" />
    <path d="M506 472L596 468L606 478L582 492Z" fill="#eec2b6" />
    <path d="M590 470L606 466V476L596 476Z" fill="#7de014" />
    <path d="M997 265L1066 258L1060 888L992 852Z" fill="url(#dark)" />
    <path d="M1066 258L1116 258L1110 882L1060 888Z" fill="#dcab9f" />
    <path d="M602 258L660 251L997 258L992 900L672 942L606 880Z" fill="url(#main)" />
    <path d="M998 495L1100 502L1064 560L998 550Z" fill="url(#under)" />
    <path d="M998 775L1094 790L1064 850L998 830Z" fill="url(#under)" />
    <path d="M998 372L1102 372L1100 502L1030 507L998 495Z" fill="#ecbbae" />
    <path d="M998 372L1028 370V507L998 495Z" fill="#d9a89b" />
    <path d="M998 650L1030 645L1097 652L1094 790L1030 793L998 775Z" fill="#ecbbae" />
    <path d="M998 650L1030 655V793L998 775Z" fill="#d9a89b" />
  </Canvas>
);

const FrontDrawing = () => (
  <Canvas viewBox="0 0 699 380" preserveAspectRatio="none">
    {[16, 158, 300, 443, 587].map((x) => <path key={x} d={`M${x} 0V380`} stroke="#949ba3" />)}
    {[39, 181, 324].map((y) => <path key={y} d={`M0 ${y}H699`} stroke="#949ba3" />)}
    <path d="M88 0V380M88 181H699" stroke="#0b0b0b" strokeWidth="2" fill="none" />
    <path d="M635 181V380" stroke="#0b0b0b" strokeWidth="3.500" />
  </Canvas>
);
const RightDrawing = () => (
  <Canvas viewBox="0 0 699 380" preserveAspectRatio="none">
    {[91, 233, 376, 518, 660].map((x) => <path key={x} d={`M${x} 0V380`} stroke="#989fa7" />)}
    {[71, 214, 357].map((y) => <path key={y} d={`M0 ${y}H699`} stroke="#989fa7" />)}
    <path d="M3 0V380M596 0V380M596 84H699M697 213V380" stroke="#0b0b0b" strokeWidth="2" fill="none" />
  </Canvas>
);

const Status = ({ items }: { items: { t: string; w: number; on?: boolean }[] }) => (
  <>{items.map((s, i) => <StatusItem key={i} $w={s.w} $on={s.on}>{s.t}</StatusItem>)}</>
);

export default function App() {
  return (
    <Page>
      <Global />
      <HiddenDefs>
        <defs>
          <linearGradient id="blue" x1="0" y1="0" x2="1" y2="1"><stop offset="0" stopColor="#aebcf5" /><stop offset="1" stopColor="#3752c4" /></linearGradient>
          <linearGradient id="gold" x1="0" y1="0" x2="0" y2="1"><stop offset="0" stopColor="#ffe99a" /><stop offset="1" stopColor="#eeb32e" /></linearGradient>
          <linearGradient id="paper" x1="0" y1="0" x2="1" y2="1"><stop offset="0" stopColor="#ffffff" /><stop offset="1" stopColor="#cfcfcf" /></linearGradient>
          <linearGradient id="gray" x1="0" y1="0" x2="1" y2="1"><stop offset="0" stopColor="#f4f4f4" /><stop offset="1" stopColor="#858585" /></linearGradient>
          <linearGradient id="orange" x1="0" y1="0" x2="0" y2="1"><stop offset="0" stopColor="#ffc21a" /><stop offset="1" stopColor="#e25a00" /></linearGradient>
          <radialGradient id="ball" cx=".4" cy=".3" r=".8"><stop offset="0" stopColor="#6f93f5" /><stop offset=".55" stopColor="#1c3db5" /><stop offset="1" stopColor="#061660" /></radialGradient>
          <radialGradient id="gball" cx=".6" cy=".35" r=".8"><stop offset="0" stopColor="#c9ee8a" /><stop offset=".6" stopColor="#4da02e" /><stop offset="1" stopColor="#143a12" /></radialGradient>
          <radialGradient id="wire" cx=".4" cy=".35" r=".8"><stop offset="0" stopColor="#ffffff" /><stop offset="1" stopColor="#8c8c8c" /></radialGradient>
        </defs>
      </HiddenDefs>

      <TitleBar>
        <TitleLogo><RhinoLogo w={22} h={27} /></TitleLogo>
        <TitleText>14 (66 KB) - Rhino 8 Educational Lab License</TitleText>
        <WinControls>
          <WinBtn $w={60}><Ico width="12" height="12" viewBox="0 0 12 12"><path d="M0 6h12" stroke="#777" /></Ico></WinBtn>
          <WinBtn $w={59}><Ico width="12" height="14" viewBox="0 0 12 14"><rect x="1.500" y="3.500" width="8" height="10" rx="1" fill="none" stroke="#777" /><path d="M4 1.500h6l1 1v8" fill="none" stroke="#777" /></Ico></WinBtn>
          <WinBtn $w={59}><Ico width="14" height="14" viewBox="0 0 14 14"><path d="M1 1l12 12M13 1L1 13" stroke="#777" /></Ico></WinBtn>
        </WinControls>
      </TitleBar>
      <MenuBar>{MENU.map((m) => <span key={m}>{m}</span>)}</MenuBar>

      <Command>
        <Grip>{[0, 1, 2, 3].map((i) => <GripDot key={i} />)}</Grip>
        <CmdBody>
          <History>
            <CmdLine>Viewport &lt;Perspective&gt; ( Viewport=Active Display=Rendered ): _</CmdLine>
            <CmdLine>Mode &lt;Rendered&gt; ( Wireframe  Shaded  Rendered  Ghosted  XRay  Technical  Artistic  Pen  Monochrome  Arctic  Raytraced ): Rendered</CmdLine>
            <CmdLine>Display mode set to "Rendered".</CmdLine>
          </History>
          <Prompt>Command:</Prompt>
        </CmdBody>
        <CmdSide><Spin>▲</Spin><Spin>▼</Spin></CmdSide>
      </Command>

      <TabBar>
        <TopTab $on>Standard</TopTab>
        {TABS.map((t) => <TopTab key={t}>{t}</TopTab>)}
        <TabGear><Gear /></TabGear>
      </TabBar>
      <ToolRow>
        {TB.map(([g, f], i) => <ToolCell key={i} $fly={f}><Ico width="29" height="29" viewBox="0 0 32 32">{g}</Ico></ToolCell>)}
      </ToolRow>

      <Main>
        <LeftCol>
          <ToolPanel>
            <PanelGrip>{[0, 1, 2, 3].map((i) => <GripH key={i} />)}</PanelGrip>
            <ToolGrid>
              {LT.map(([g, f], i) => <ToolCell key={i} $fly={f}><Ico width="28" height="28" viewBox="0 0 32 32">{g}</Ico></ToolCell>)}
            </ToolGrid>
          </ToolPanel>
          <OsnapPanel>
            <PanelHead>OSnap<Gear /></PanelHead>
            <SnapTabs>
              <SnapTab $on><Ico width="20" height="18" viewBox="0 0 32 32"><circle cx="14" cy="16" r="13" fill="none" stroke="#555" strokeWidth="1.500" /><rect x="10" y="13" width="6" height="6" fill="#fff" stroke="#222" strokeWidth="2" /><path d="M16 16h15" stroke="#222" strokeWidth="2" /></Ico></SnapTab>
              <SnapTab><Ico width="20" height="20" viewBox="0 0 32 32"><path d="M5 7h22L19 17v10l-6 2V17z" fill="url(#gray)" stroke="#333" /><path d="M26 1h5v5M1 31V26M1 31h5" fill="none" stroke="#222" strokeWidth="2" /></Ico></SnapTab>
            </SnapTabs>
            <SnapList>
              {SNAP.map(([n, c]) => <SnapRow key={n}><Box>{c && <Tick />}</Box>{n}</SnapRow>)}
              <SnapRow $gap><Box />Disable</SnapRow>
            </SnapList>
          </OsnapPanel>
        </LeftCol>

        <Center>
          <ViewGrid>
            <Viewport>
              <TopDrawing />
              <ViewTab $w={58}>Top<ViewArrow /></ViewTab>
              <Axis $l={44} $t={299} $h={37} $w={37}><AxisV>y</AxisV><AxisH>x</AxisH></Axis>
            </Viewport>
            <Viewport $white>
              <PerspDrawing />
              <ViewTab $w={114} $on>Perspective<ViewArrow /></ViewTab>
            </Viewport>
            <Viewport>
              <FrontDrawing />
              <ViewTab $w={70}>Front<ViewArrow /></ViewTab>
              <Axis $l={44} $t={299} $h={37} $w={37}><AxisV>z</AxisV><AxisH>x</AxisH></Axis>
            </Viewport>
            <Viewport>
              <RightDrawing />
              <ViewTab $w={71}>Right<ViewArrow /></ViewTab>
              <Axis $l={46} $t={304} $h={33} $w={38}><AxisV>z</AxisV><AxisH>y</AxisH></Axis>
            </Viewport>
          </ViewGrid>
          <BottomTabs>
            <BtmTab>Top</BtmTab>
            <BtmTab $on>Perspective</BtmTab>
            <BtmTab>Front</BtmTab>
            <BtmTab>Right</BtmTab>
            <BtmPlus><Ico width="11" height="13" viewBox="0 0 11 13"><path d="M4 1h3v4h3v3H7v4H4V8H1V5h3z" fill="none" stroke="#999" /></Ico></BtmPlus>
          </BottomTabs>
        </Center>

        <RightCol>
          <LayerHead>Layers<Gear /></LayerHead>
          <LayerBody>
            <LayerMain>
              <LayerTools>
                {LayerIcons.map((g, i) => <LayerTool key={i}><Ico width="19" height="19" viewBox="0 0 32 32">{g}</Ico></LayerTool>)}
              </LayerTools>
              <SearchBox>
                <Ico width="15" height="15" viewBox="0 0 16 16"><circle cx="6.500" cy="6.500" r="5" fill="none" stroke="#333" strokeWidth="1.300" /><path d="M10 10l5 5" stroke="#333" strokeWidth="1.300" /></Ico>
                Search
              </SearchBox>
              <LayerTable>
                <LayerRow $head>
                  <HeadCell>Layer</HeadCell><HeadCell /><HeadCell /><HeadCell /><HeadCell /><HeadCell>Material</HeadCell><HeadCell>Linetype</HeadCell>
                </LayerRow>
                {LAYERS.map((l) => (
                  <LayerRow key={l.n}>
                    <Cell $indent={20}>{l.n}</Cell><Cell />
                    <Cell><Bulb /></Cell><Cell><Lock /></Cell>
                    <Cell $indent={0}><Swatch $c={l.c} /></Cell>
                    <MatCell><Ball $c={l.m} />{l.t}</MatCell>
                    <Cell $indent={1}>Continuous</Cell>
                  </LayerRow>
                ))}
                <LayerRow $bold>
                  <Cell $indent={20}>3d</Cell>
                  <Cell><Ico width="18" height="14" viewBox="0 0 18 14"><path d="M1 7l5 5L17 1" fill="none" stroke="#222" strokeWidth="1.300" /></Ico></Cell>
                  <Cell /><Cell />
                  <Cell $indent={0}><Swatch $c="#77f000" $dark /></Cell>
                  <MatCell><Ball $c="#66cc00" />Plaster</MatCell>
                  <Cell $indent={1}>Continuous</Cell>
                </LayerRow>
                <LayerScroll />
              </LayerTable>
            </LayerMain>
            <SideStrip>
              <SideTop><Ico width="22" height="22" viewBox="0 0 32 32"><Shield /></Ico></SideTop>
              <SideRest>
                <SideSlot><Ico width="20" height="20" viewBox="0 0 32 32"><Wheel r={11} w={6} /></Ico></SideSlot>
                <SideSlot><Ico width="20" height="24" viewBox="0 0 32 32"><rect x="2" y="3" width="28" height="21" fill="url(#gray)" stroke="#111" strokeWidth="2" /><path d="M10 29h12l-2-5h-8z" fill="#111" /></Ico></SideSlot>
                <SideSlot><Ico width="20" height="24" viewBox="0 0 32 32"><rect x="2" y="3" width="28" height="26" fill="#fff" stroke="#345" strokeWidth="1.500" /><rect x="4" y="9" width="24" height="18" fill="url(#blue)" /><text x="16" y="25" textAnchor="middle" fontFamily="Liberation Serif" fontWeight="700" fontSize="18" fill="#fff">?</text></Ico></SideSlot>
                <SideSlot><Ico width="20" height="20" viewBox="0 0 32 32"><path d="M1 13l15-7 15 7-15 7z" fill="#111" /><path d="M8 17v7c4 3 12 3 16 0v-7l-8 4z" fill="#333" /></Ico></SideSlot>
              </SideRest>
            </SideStrip>
          </LayerBody>
        </RightCol>
      </Main>

      <StatusBar>
        <StatusItem $w={52}><PaneBtnLeft /></StatusItem>
        <Status items={STATUS} />
        <StatusItem $w={27}><StatSwatch /></StatusItem>
        <Status items={STATUS2} />
        <StatusItem $w={26}><Ico width="12" height="19" viewBox="0 0 12 19"><path d="M3.500 8V4a2.500 2.500 0 0 1 5 0v4" fill="none" stroke="#aaa" /><rect x="1" y="8" width="10" height="10" rx="1" fill="#eee" stroke="#aaa" /></Ico></StatusItem>
        <Status items={STATUS3} />
        <PaneBtn />
      </StatusBar>

      <Taskbar>
        <Weather>
          <WeatherIcon>
            <Ico width="32" height="24" viewBox="0 0 32 24"><path d="M6 23a5.500 5.500 0 0 1-1-11c2-8 14-9 17-2a6.500 6.500 0 0 1 3 13z" fill="#9cc5f5" /><path d="M3 15h26v8H6z" fill="#7fb0ee" opacity=".6" /></Ico>
          </WeatherIcon>
          <TempBadge>21°</TempBadge>
        </Weather>
        <WinBox>
          <Ico width="29" height="29" viewBox="0 0 29 29"><rect width="14" height="14" fill="#5ec6f8" /><rect x="15" width="14" height="14" fill="#42b4f4" /><rect y="15" width="14" height="14" fill="#2aa4ee" /><rect x="15" y="15" width="14" height="14" fill="#1f8fe0" /></Ico>
        </WinBox>
        <Search>
          <Ico width="20" height="22" viewBox="0 0 20 22"><circle cx="9" cy="9" r="7" fill="none" stroke="#222" strokeWidth="2" /><path d="M13.500 14.500L18 20" stroke="#222" strokeWidth="2" /></Ico>
          Procurar
        </Search>
        <Apps>
          {Apps17.map(([g, k], i) => <AppCell key={i} $on={k === "pink"}>{g}{k && <AppDot $kind={k} />}</AppCell>)}
        </Apps>
        <Tray>
          <TrayIcon $w={30}><Ico width="16" height="10" viewBox="0 0 16 10"><path d="M2 9l6-7 6 7" fill="none" stroke="#fff" strokeWidth="1.600" /></Ico></TrayIcon>
          <TrayIcon $w={40}><Ico width="22" height="20" viewBox="0 0 22 20"><path d="M1 7c6-6 14-6 20 0M4 10.500c4-4 10-4 14 0M7 14c2-2 6-2 8 0" fill="none" stroke="#fff" strokeWidth="1.500" /><circle cx="11" cy="17" r="1.800" fill="#fff" /></Ico></TrayIcon>
          <TrayIcon $w={24}><Ico width="22" height="22" viewBox="0 0 22 22"><path d="M2 8h4l5-5v16l-5-5H2z" fill="none" stroke="#fff" /><path d="M14 8c1.500 2 1.500 4 0 6M17 5c3 4 3 8 0 12" fill="none" stroke="#fff" /></Ico></TrayIcon>
          <TrayIcon $w={33}><Ico width="20" height="14" viewBox="0 0 20 14"><rect x="1" y="1" width="16" height="12" rx="3" fill="none" stroke="#fff" strokeWidth="1.300" /><rect x="3" y="3" width="7" height="8" rx="1" fill="#fff" /><rect x="18" y="5" width="1.500" height="4" fill="#fff" /></Ico></TrayIcon>
          <Clock><span>12:59</span><span>05/11/2024</span></Clock>
          <TrayIcon $w={40}><Ico width="16" height="20" viewBox="0 0 16 20"><path d="M8 1c-3.500 0-5 3-5 6v4l-2 3h14l-2-3V7c0-3-1.500-6-5-6z" fill="#9ed0f5" /><path d="M5.500 16a2.500 2.500 0 0 0 5 0z" fill="#9ed0f5" /></Ico></TrayIcon>
        </Tray>
      </Taskbar>
    </Page>
  );
}
